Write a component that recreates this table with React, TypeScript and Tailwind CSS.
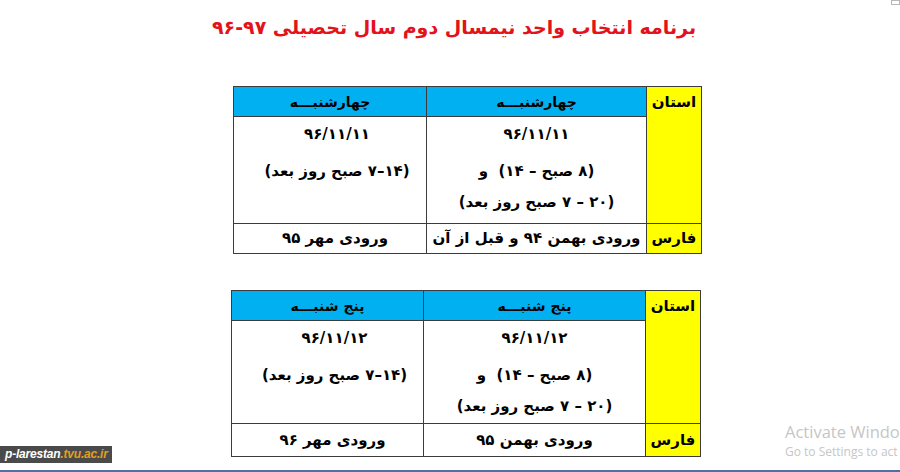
import React from "react";

const fa = "font-['DejaVu_Sans',sans-serif]";

function Lines({ lines }: { lines: string[] }) {
  return (
    <div className="flex flex-col items-center pt-[2px]">
      <div className="leading-[30px] h-[30px] mb-[7px]">{lines[0]}</div>
      {lines.slice(1).map((l, i) => (
        <div key={i} className="leading-[31px] h-[31px] whitespace-pre">
          {l}
        </div>
      ))}
    </div>
  );
}

function ScheduleTable({
  day,
  date,
  last1,
  last2,
  bodyH,
  lastH,
  isFirst,
}: {
  day: string;
  date: string;
  last1: string;
  last2: string;
  bodyH: string;
  lastH: string;
  isFirst: boolean;
}) {
  const b = "border border-[#3c3c3c]";
  return (
    <table
      dir="rtl"
      className={`border-collapse table-fixed ${fa} font-bold text-black text-[15px] ${
        isFirst ? "ml-[233px] w-[469px]" : "ml-[231px] w-[470px]"
      }`}
    >
      <colgroup>
        <col className="w-[55px]" />
        <col className={isFirst ? "w-[220px]" : "w-[222px]"} />
        <col />
      </colgroup>
      <tbody>
        <tr className="h-[30px]">
          <td rowSpan={2} className={`${b} bg-[#ffff00] align-top text-center pt-[3px] leading-[24px]`}>
            استان
          </td>
          <td className={`${b} bg-[#00b0f0] text-center leading-[24px] text-[14px]`}>{day}</td>
          <td className={`${b} bg-[#00b0f0] text-center leading-[24px] text-[14px]`}>{day}</td>
        </tr>
        <tr className={bodyH}>
          <td className={`${b} align-top text-center`}>
            <Lines lines={[date, "(۸ صبح – ۱۴)  و", "(۲۰ – ۷ صبح روز بعد)"]} />
          </td>
          <td className={`${b} align-top text-center pl-[14px]`}>
            <Lines lines={[date, "(۱۴–۷ صبح روز بعد)"]} />
          </td>
        </tr>
        <tr className={lastH}>
          <td className={`${b} bg-[#ffff00] text-center`}>فارس</td>
          <td className={`${b} text-center whitespace-nowrap`}>{last1}</td>
          <td className={`${b} text-center pl-[10px]`}>{last2}</td>
        </tr>
      </tbody>
    </table>
  );
}

export default function App() {
  return (
    <div className="relative w-[900px] h-[472px] bg-white overflow-hidden">
      <div className="flex flex-col">
        <h1
          dir="rtl"
          className={`${fa} mt-[12px] h-[30px] leading-[30px] pl-[8px] text-center text-[19px] font-bold text-[#e3121b]`}
        >
          برنامه انتخاب واحد نیمسال دوم سال تحصیلی ۹۷-۹۶
        </h1>
        <div className="mt-[44px]">
          <ScheduleTable
            isFirst
            day="چهارشنبـــه"
            date="۹۶/۱۱/۱۱"
            last1="ورودی بهمن ۹۴ و قبل از آن"
            last2="ورودی مهر ۹۵"
            bodyH="h-[107px]"
            lastH="h-[30px]"
          />
        </div>
        <div className="mt-[36px]">
          <ScheduleTable
            isFirst={false}
            day="پنج شنبـــه"
            date="۹۶/۱۱/۱۲"
            last1="ورودی بهمن ۹۵"
            last2="ورودی مهر ۹۶"
            bodyH="h-[103px]"
            lastH="h-[33px]"
          />
        </div>
      </div>

      <div className="absolute left-0 top-[446px] h-[17px] w-[112px] bg-[#4a4a4a] pl-[5px] font-['Liberation_Sans',sans-serif] text-[12px] leading-[17px] italic font-bold whitespace-nowrap tracking-[-0.2px]">
        <span className="text-white">p-larestan</span>
        <span className="text-[#e0a020]">.tvu.ac.ir</span>
      </div>

      <div className="absolute right-0 top-0 h-[5px] w-[9px] border border-[#b8b8b8] bg-white" />

      <div className="absolute left-[785px] top-[421px] font-['Open_Sans',sans-serif] text-[#c6c6c6] whitespace-nowrap">
        <div className="text-[16.5px] leading-[22px]">Activate Windo</div>
        <div className="text-[12px] leading-[18px]">Go to Settings to act</div>
      </div>

      <div className="absolute left-0 bottom-0 h-[2px] w-full bg-[#4f6fa6]" />
    </div>
  );
}
